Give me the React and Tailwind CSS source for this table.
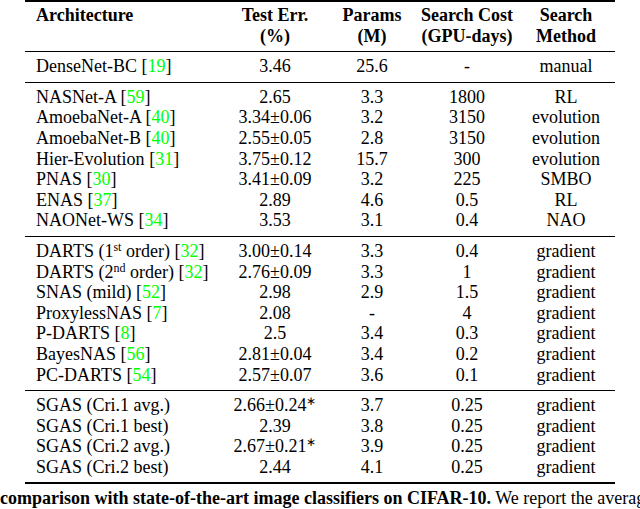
import React from 'react';

const Cite = ({ n }) => (
  <>
    {' '}[<span className="text-[#00ff00]">{n}</span>]
  </>
);

const sections = [
  [
    [<>DenseNet-BC<Cite n="19" /></>, '3.46', '25.6', '-', 'manual'],
  ],
  [
    [<>NASNet-A<Cite n="59" /></>, '2.65', '3.3', '1800', 'RL'],
    [<>AmoebaNet-A<Cite n="40" /></>, '3.34±0.06', '3.2', '3150', 'evolution'],
    [<>AmoebaNet-B<Cite n="40" /></>, '2.55±0.05', '2.8', '3150', 'evolution'],
    [<>Hier-Evolution<Cite n="31" /></>, '3.75±0.12', '15.7', '300', 'evolution'],
    [<>PNAS<Cite n="30" /></>, '3.41±0.09', '3.2', '225', 'SMBO'],
    [<>ENAS<Cite n="37" /></>, '2.89', '4.6', '0.5', 'RL'],
    [<>NAONet-WS<Cite n="34" /></>, '3.53', '3.1', '0.4', 'NAO'],
  ],
  [
    [<>DARTS (1<sup className="text-[12px]">st</sup> order)<Cite n="32" /></>, '3.00±0.14', '3.3', '0.4', 'gradient'],
    [<>DARTS (2<sup className="text-[12px]">nd</sup> order)<Cite n="32" /></>, '2.76±0.09', '3.3', '1', 'gradient'],
    [<>SNAS (mild)<Cite n="52" /></>, '2.98', '2.9', '1.5', 'gradient'],
    [<>ProxylessNAS<Cite n="7" /></>, '2.08', '-', '4', 'gradient'],
    [<>P-DARTS<Cite n="8" /></>, '2.5', '3.4', '0.3', 'gradient'],
    [<>BayesNAS<Cite n="56" /></>, '2.81±0.04', '3.4', '0.2', 'gradient'],
    [<>PC-DARTS<Cite n="54" /></>, '2.57±0.07', '3.6', '0.1', 'gradient'],
  ],
  [
    ['SGAS (Cri.1 avg.)', <>2.66±0.24<sup className="text-[12px]">∗</sup></>, '3.7', '0.25', 'gradient'],
    ['SGAS (Cri.1 best)', '2.39', '3.8', '0.25', 'gradient'],
    ['SGAS (Cri.2 avg.)', <>2.67±0.21<sup className="text-[12px]">∗</sup></>, '3.9', '0.25', 'gradient'],
    ['SGAS (Cri.2 best)', '2.44', '4.1', '0.25', 'gradient'],
  ],
];

const Row = ({ cells }) => (
  <div className="grid grid-cols-[210px_80px_114px_76px_122px]">
    <div className="pl-[11px] whitespace-nowrap">{cells[0]}</div>
    {cells.slice(1).map((c, i) => (
      <div key={i} className="flex justify-center whitespace-nowrap">
        <span>{c}</span>
      </div>
    ))}
  </div>
);

export default function App() {
  // 2px heavy rules top and bottom, 1px mid rules
  return (
    <div className="w-[640px] h-[509px] overflow-hidden bg-white text-black font-[family-name:Liberation_Serif,serif] text-[18px] leading-[20.6px]">
      <div className="ml-[25px] w-[590px]">
        <div className="border-t-2 border-black pt-[3px] pb-[5px] font-bold">
          <div className="grid grid-cols-[210px_80px_114px_76px_122px]">
            <div className="pl-[11px]">Architecture</div>
            <div className="flex flex-col items-center whitespace-nowrap"><span>Test Err.</span><span>(%)</span></div>
            <div className="flex flex-col items-center whitespace-nowrap"><span>Params</span><span>(M)</span></div>
            <div className="flex flex-col items-center whitespace-nowrap"><span>Search Cost</span><span>(GPU-days)</span></div>
            <div className="flex flex-col items-center whitespace-nowrap"><span>Search</span><span>Method</span></div>
          </div>
        </div>
        {sections.map((rows, s) => (
          <div key={s} className="border-t border-black pt-[4px] pb-[5px]">
            {rows.map((r, i) => (
              <Row key={i} cells={r} />
            ))}
          </div>
        ))}
        <div className="border-t-2 border-black" />
      </div>
      <p className="mt-[4px] whitespace-nowrap">
        <span className="font-bold">comparison with state-of-the-art image classifiers on CIFAR-10.</span> We report the average
      </p>
    </div>
  );
}
